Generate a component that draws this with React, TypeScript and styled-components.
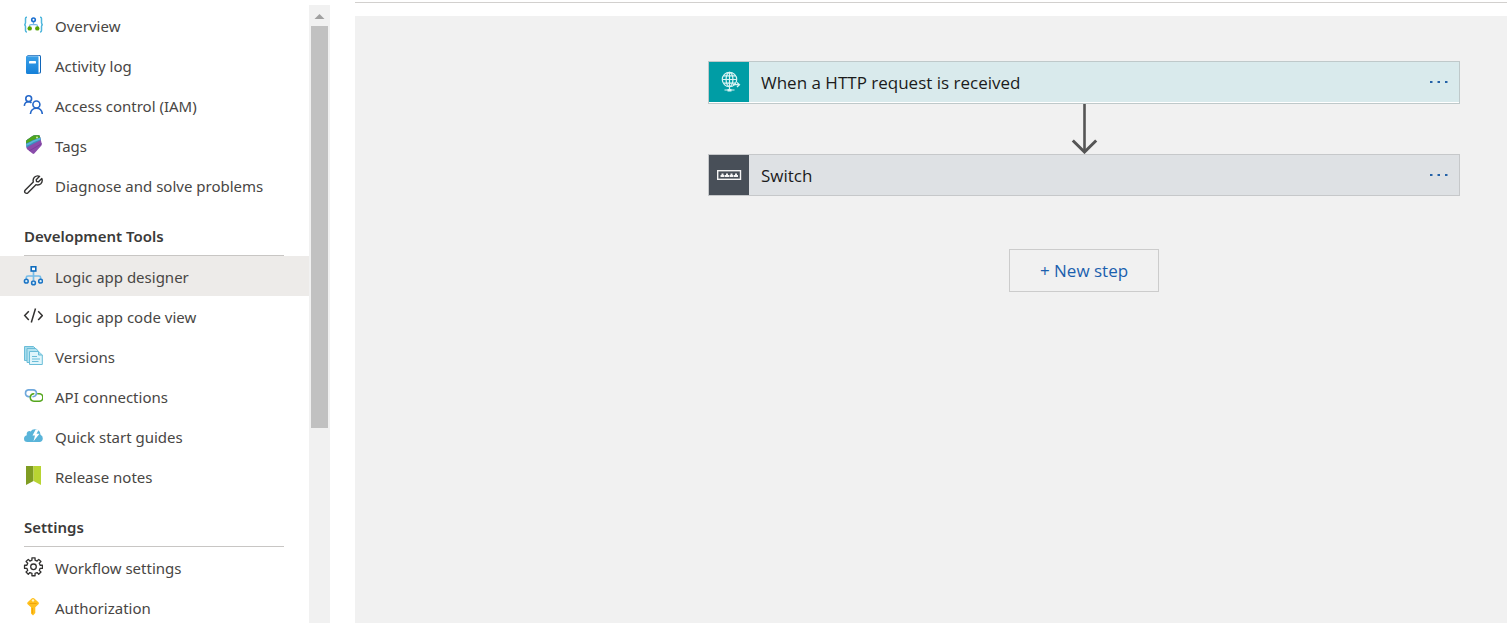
import React from "react";
import styled, { createGlobalStyle } from "styled-components";

const GlobalStyle = createGlobalStyle`
  * { box-sizing: border-box; }
  body {
    margin: 0;
    background: #ffffff;
    color: #484644;
    font-family: "Noto Sans", "Open Sans", sans-serif;
    font-size: 15px;
  }
`;

const Page = styled.div`
  display: flex;
  height: 100vh;
  overflow: hidden;
`;

const Sidebar = styled.aside`
  display: flex;
  flex: none;
  width: 330px;
  padding-top: 5px;
`;

const Menu = styled.nav`
  flex: 1;
  min-width: 0;
  overflow: hidden;
`;

const MenuList = styled.ul`
  margin: 0;
  padding: 0;
  list-style: none;
`;

const MenuLink = styled.a<{ $selected?: boolean }>`
  display: flex;
  align-items: center;
  gap: 12px;
  height: 40px;
  padding-left: 23px;
  background: ${(p) => (p.$selected ? "#edebe9" : "transparent")};
  color: inherit;
  text-decoration: none;
  white-space: nowrap;
`;

const MenuText = styled.span`
  padding-top: 2px;
  line-height: 20px;
`;

const MenuHeading = styled.h2`
  display: flex;
  align-items: flex-end;
  height: 51px;
  margin: 0 25px 0 24px;
  padding-bottom: 9px;
  border-bottom: 1px solid #c8c6c4;
  color: #3b3a39;
  font-size: 15px;
  font-weight: 600;
  line-height: 20px;
`;

const Icon = styled.svg`
  flex: none;
  width: 20px;
  height: 20px;
  fill: none;
`;

const ScrollTrack = styled.div`
  display: flex;
  flex: none;
  flex-direction: column;
  width: 21px;
  padding: 0 2px;
  background: #f1f1f1;
`;

const ScrollArrow = styled.svg`
  flex: none;
  width: 17px;
  height: 21px;
`;

const ScrollThumb = styled.div`
  height: 67.3%;
  max-height: 402px;
  background: #c1c1c1;
`;

const Main = styled.main`
  display: flex;
  flex: 1;
  flex-direction: column;
  min-width: 0;
  padding: 2px 0 0 25px;
`;

const Toolbar = styled.div`
  flex: none;
  height: 14px;
  border-top: 1px solid #d2d0ce;
`;

const Designer = styled.section`
  display: flex;
  flex: 1;
  flex-direction: column;
  align-items: center;
  padding: 45px 47px 0 353px;
  background: #f1f1f1;
  font-family: "Open Sans", "Noto Sans", sans-serif;
`;

const Card = styled.article<{ $tint: string; $line: string }>`
  display: flex;
  width: 100%;
  border: 1px solid ${(p) => p.$line};
  background: ${(p) => p.$tint};
`;

const TriggerCard = styled(Card)`
  padding-bottom: 1px;
  box-shadow: inset 0 -1px #ffffff;
`;

const CardIcon = styled.svg<{ $brand: string }>`
  flex: none;
  width: 40px;
  height: 40px;
  background: ${(p) => p.$brand};
  fill: none;
`;

const CardTitle = styled.h3`
  flex: 1;
  margin: 0;
  padding: 0 12px;
  color: #1b1b1b;
  font-size: 17px;
  font-weight: 400;
  line-height: 42px;
  height: 40px;
`;

const MoreButton = styled.button`
  display: flex;
  align-items: center;
  justify-content: center;
  width: 40px;
  height: 40px;
  padding: 0;
  border: 0;
  background: transparent;
`;

const Connector = styled.svg`
  flex: none;
  width: 28px;
  height: 50px;
  fill: none;
`;

const NewStepButton = styled.button`
  width: 150px;
  height: 43px;
  margin-top: 53px;
  padding: 0;
  border: 1px solid #cccccc;
  background: transparent;
  color: #1b5fae;
  font-family: inherit;
  font-size: 17px;
`;

const OverviewIcon = () => (
  <Icon viewBox="0 0 20 20" aria-hidden="true">
    <path d="M4 2.200H3.600Q2.500 2.200 2.500 3.600V7.800Q2.500 9.500 1.200 9.700Q2.500 9.900 2.500 11.600V15.600Q2.500 17 3.600 17H4M17 2.200h.4Q18.500 2.200 18.500 3.600V7.800Q18.500 9.500 19.800 9.700Q18.500 9.900 18.500 11.600V15.600Q18.500 17 17.400 17H17" stroke="#4fb6dc" strokeWidth="1.500" />
    <path d="M10.500 7v3M6.500 12.500V11Q6.500 9.700 8 9.700h5Q14.500 9.700 14.500 11v1.500" stroke="#7ab8e8" strokeWidth="1.200" />
    <circle cx="10.500" cy="4.800" r="1.800" stroke="#1a6fd0" strokeWidth="1.600" />
    <circle cx="6.700" cy="13.400" r="2.200" fill="#57a300" />
    <circle cx="14.300" cy="13.400" r="2.200" fill="#57a300" />
  </Icon>
);

const LogIcon = () => (
  <Icon viewBox="0 0 20 20" aria-hidden="true">
    <defs>
      <linearGradient id="book" x1="0" y1="0" x2="0" y2="1">
        <stop offset="0" stopColor="#3aa0e8" />
        <stop offset="1" stopColor="#1580d8" />
      </linearGradient>
    </defs>
    <path d="M4.500 0H16.500Q18 0 18 1.500V17Q18 18.500 16.500 18.500H4.500z" fill="#1065b8" />
    <path d="M5 .8H15.800Q17 .8 17 2V16.800Q17 17.800 16 17.800H5z" fill="#fff" />
    <path d="M4.200 1.200H15.500V19H4.500Q3 19 3 17.500V2.200Q3 .6 4.200 1.200z" fill="url(#book)" />
    <rect x="6" y="6" width="7" height="2.500" rx=".4" fill="#fff" />
  </Icon>
);

const AccessIcon = () => (
  <Icon viewBox="0 0 20 20" stroke="#2467c9" strokeWidth="1.600" aria-hidden="true">
    <circle cx="5.700" cy="3.700" r="2.900" />
    <path d="M1.300 10.800Q1.800 6.800 5.500 6.800Q7.400 6.800 8.400 8" />
    <circle cx="13.400" cy="9.500" r="3.500" />
    <path d="M7.400 19Q8 13.200 13.400 13.200T19.300 19" />
  </Icon>
);

const TagsIcon = () => (
  <Icon viewBox="0 0 20 20" aria-hidden="true">
    <defs>
      <clipPath id="tag">
        <path d="M3.800 5 9.500 1Q10.500 .2 12 .2L15.500.3Q16.600.4 17 1.500L18.700 8.500Q19 10 18 11L11.300 18.500Q10.500 19.300 9.500 18.500L4.400 14.500Q3.600 13.800 3.500 12.500L3 7Q3 5.600 3.800 5z" />
      </clipPath>
    </defs>
    <g clipPath="url(#tag)">
      <path d="M0 0h20v20H0z" fill="#8a4cab" />
      <path d="M0 14.500Q6 11.500 9 9.500L20 4V0H0z" fill="#3a8fc0" />
      <path d="M0 9.500Q6 7.500 9 5.500L20 1.500V0H0z" fill="#4ea51c" />
      <path d="M0 11.500Q6 9 10 6.500L20 2.500" stroke="#5bb6d6" strokeWidth="1.500" />
      <path d="M6 16 19 8.500" stroke="#773899" strokeWidth=".8" />
    </g>
    <circle cx="14" cy="2.500" r="1" fill="#c9edac" />
  </Icon>
);

const WrenchIcon = () => (
  <Icon viewBox="0 0 20 20" stroke="#323130" strokeWidth="1.400" strokeLinejoin="round" aria-hidden="true">
    <path d="M16.600 1.300 13.200 4.700 13.500 6.500 15.300 6.900 18.800 3.500Q20 6.600 17.800 8.800 15.800 10.600 12.900 9.700L5 17.700Q3.600 19 2.200 17.800 1 16.400 2.300 15L10.300 7Q9.600 4.200 11.400 2.300 13.700.1 16.600 1.300z" />
  </Icon>
);

const DesignerIcon = () => (
  <Icon viewBox="0 0 20 20" aria-hidden="true">
    <path d="M10.500 5v9M3.300 13.200V11.500Q3.300 10 5 10H16Q17.600 10 17.600 11.500v1.700" stroke="#76bce8" strokeWidth="1.700" />
    <rect x="8.200" y=".8" width="4.600" height="4.200" fill="#fff" stroke="#0f6cbd" strokeWidth="1.600" />
    <g fill="#d7effc" stroke="#1c74c4" strokeWidth="1.500">
      <circle cx="3.300" cy="15.200" r="1.900" />
      <circle cx="10.500" cy="16.900" r="1.900" />
      <circle cx="17.600" cy="15.200" r="1.900" />
    </g>
  </Icon>
);

const CodeIcon = () => (
  <Icon viewBox="0 0 20 20" stroke="#323130" strokeWidth="1.500" aria-hidden="true">
    <path d="M5.800 5.200 1.700 9.600 5.800 14M15.200 5.200 19.300 9.600 15.200 14M12.500 2.500 8.300 16.500" />
  </Icon>
);

const VersionsIcon = () => (
  <Icon viewBox="0 0 20 20" stroke="#6bbdd8" strokeWidth="1" aria-hidden="true">
    <path d="M1.500.500H10.500L14 4V14.500H1.500z" fill="#a6dcec" />
    <path d="M4 2.500H13L16 6V16.500H4z" fill="#b5e3f0" />
    <path d="M6.500 5.500H15.500L19.300 9V18.500H6.500z" fill="#dff5fb" />
    <path d="M15.500 5.500V9H19.300" fill="#a6dcec" />
    <path d="M9 10.500h5M9 13h8M9 15.500h6.500" />
  </Icon>
);

const LinkIcon = () => (
  <Icon viewBox="0 0 20 20" strokeWidth="1.600" strokeLinecap="round" aria-hidden="true">
    <path d="M6.500 10.600H5.300A3.400 3.400 0 0 1 5.300 3.900H10Q13.400 4.100 13.500 7.300" stroke="#6fa8dc" />
    <path d="M14.700 7.800h1.500A3.700 3.700 0 0 1 16.200 15.200H11Q7.200 14.900 7.300 11.300 7.500 8 10.800 7.800" stroke="#55a61e" />
    <path d="M13.500 7.300Q13.200 10.600 10 10.700" stroke="#6fa8dc" />
  </Icon>
);

const CloudIcon = () => (
  <Icon viewBox="0 0 20 20" aria-hidden="true">
    <path d="M4.500 16Q1 16 1 12.700 1 9.800 3.800 9.200 3.200 6.300 5.500 5.300 6.800 4.800 7.700 5.500 9 3 12.300 3.300 17 3.500 17.500 8.700 20 9.700 19.800 12.600 19.600 16 16.500 16z" fill="#59b4d9" />
    <path d="M12.700 3.500 9.500 9.600H12L10.500 15.200 16.500 7.700H13.500L15.800 3.500z" fill="#fff" />
  </Icon>
);

const BookmarkIcon = () => (
  <Icon viewBox="0 0 20 20" aria-hidden="true">
    <path d="M3 0H10.500V15L3 19z" fill="#7f9c22" />
    <path d="M10.500 0H18V19L10.500 15z" fill="#b8d432" />
  </Icon>
);

const gearTeeth = Array.from({ length: 8 }, (_, i) => {
  const at = (radius: number, degrees: number) => {
    const a = ((i * 45 + degrees) * Math.PI) / 180;
    return `${(10.5 + radius * Math.cos(a)).toFixed(2)} ${(9.8 + radius * Math.sin(a)).toFixed(2)}`;
  };
  return `${at(6.8, -13)} L${at(9.1, -10)} L${at(9.1, 10)} L${at(6.8, 13)}`;
}).join(" L");

const GearIcon = () => (
  <Icon viewBox="0 0 20 20" stroke="#323130" strokeWidth="1.300" strokeLinejoin="round" aria-hidden="true">
    <path d={`M${gearTeeth}z`} />
    <circle cx="10.500" cy="9.800" r="2.800" />
  </Icon>
);

const KeyIcon = () => (
  <Icon viewBox="0 0 20 20" aria-hidden="true">
    <path d="M9 1.300Q10 .6 11 1.300L15.500 5.200Q16.400 6.200 15.500 7.300L12.300 10.200V16L10 18.500 8 16.500V10.200L4.600 7.300Q3.600 6.200 4.600 5.200z" fill="#ffc01e" />
    <path d="M6.500 6.500h7" stroke="#f0a30a" strokeWidth="1" />
    <path d="M9.400 11v5.500" stroke="#f0a30a" strokeWidth="1" />
    <circle cx="10" cy="3.400" r="1.200" fill="#fff3c4" />
  </Icon>
);

type Item = { text: string; icon: React.ComponentType; selected?: boolean };
type Group = { title?: string; items: Item[] };

const groups: Group[] = [
  {
    items: [
      { text: "Overview", icon: OverviewIcon },
      { text: "Activity log", icon: LogIcon },
      { text: "Access control (IAM)", icon: AccessIcon },
      { text: "Tags", icon: TagsIcon },
      { text: "Diagnose and solve problems", icon: WrenchIcon },
    ],
  },
  {
    title: "Development Tools",
    items: [
      { text: "Logic app designer", icon: DesignerIcon, selected: true },
      { text: "Logic app code view", icon: CodeIcon },
      { text: "Versions", icon: VersionsIcon },
      { text: "API connections", icon: LinkIcon },
      { text: "Quick start guides", icon: CloudIcon },
      { text: "Release notes", icon: BookmarkIcon },
    ],
  },
  {
    title: "Settings",
    items: [
      { text: "Workflow settings", icon: GearIcon },
      { text: "Authorization", icon: KeyIcon },
    ],
  },
];

const More = ({ label }: { label: string }) => (
  <MoreButton type="button" aria-label={label}>
    <svg width="20" height="4" viewBox="0 0 20 4" fill="#2462a8" aria-hidden="true">
      <rect x="1" y="1" width="2.500" height="2" />
      <rect x="8.500" y="1" width="2.500" height="2" />
      <rect x="16" y="1" width="2.500" height="2" />
    </svg>
  </MoreButton>
);

export default function App() {
  return (
    <Page>
      <GlobalStyle />
      <Sidebar>
        <Menu aria-label="Logic app">
          {groups.map((group, index) => (
            <React.Fragment key={index}>
              {group.title && <MenuHeading>{group.title}</MenuHeading>}
              <MenuList>
                {group.items.map(({ text, icon: ItemIcon, selected }) => (
                  <li key={text}>
                    <MenuLink href="#" $selected={selected} aria-current={selected ? "page" : undefined}>
                      <ItemIcon />
                      <MenuText>{text}</MenuText>
                    </MenuLink>
                  </li>
                ))}
              </MenuList>
            </React.Fragment>
          ))}
        </Menu>
        <ScrollTrack aria-hidden="true">
          <ScrollArrow viewBox="0 0 17 21">
            <path d="M3.500 14 8.500 9 13.500 14z" fill="#a0a0a0" />
          </ScrollArrow>
          <ScrollThumb />
        </ScrollTrack>
      </Sidebar>
      <Main>
        <Toolbar />
        <Designer>
          <TriggerCard $tint="#d9eaec" $line="#bfc9ca">
            <CardIcon $brand="#009da5" viewBox="0 0 40 40" stroke="#d9f3f3" strokeWidth="1.200" aria-hidden="true">
              <circle cx="20.500" cy="17.500" r="7.200" />
              <ellipse cx="20.500" cy="17.500" rx="3.400" ry="7.200" />
              <path d="M20.500 10.300v14.400M13.300 17.500h14.400M14.500 13.800h12M14.500 21.200h12" />
              <path d="M24 22.700h6M28 20.500l2.500 2.200L28 25M20.500 25v3M15.500 28h10" />
              <path d="M18.500 27h4v2.500h-4z" fill="#d9f3f3" stroke="none" />
            </CardIcon>
            <CardTitle>When a HTTP request is received</CardTitle>
            <More label="Trigger menu" />
          </TriggerCard>
          <Connector viewBox="0 0 28 50" stroke="#555555" aria-hidden="true">
            <path d="M14.500 0v48" strokeWidth="2.600" />
            <path d="M2.800 36.500 14.500 48 26.200 36.500" strokeWidth="3" />
          </Connector>
          <Card $tint="#dee1e4" $line="#c6c8ca">
            <CardIcon $brand="#484f58" viewBox="0 0 40 40" aria-hidden="true">
              <rect x="8.700" y="15.700" width="22.800" height="8.600" stroke="#f4f4f4" strokeWidth="1.400" />
              <path d="M11.500 22v-2h1v-1.500h2v1.500h1v2zM16 22v-2h1v-1.500h2v1.500h1v2zM20.500 22v-2h1v-1.500h2v1.500h1v2zM25 22v-2h1v-1.500h2v1.500h1v2z" fill="#f4f4f4" />
            </CardIcon>
            <CardTitle>Switch</CardTitle>
            <More label="Switch menu" />
          </Card>
          <NewStepButton type="button">+ New step</NewStepButton>
        </Designer>
      </Main>
    </Page>
  );
}
